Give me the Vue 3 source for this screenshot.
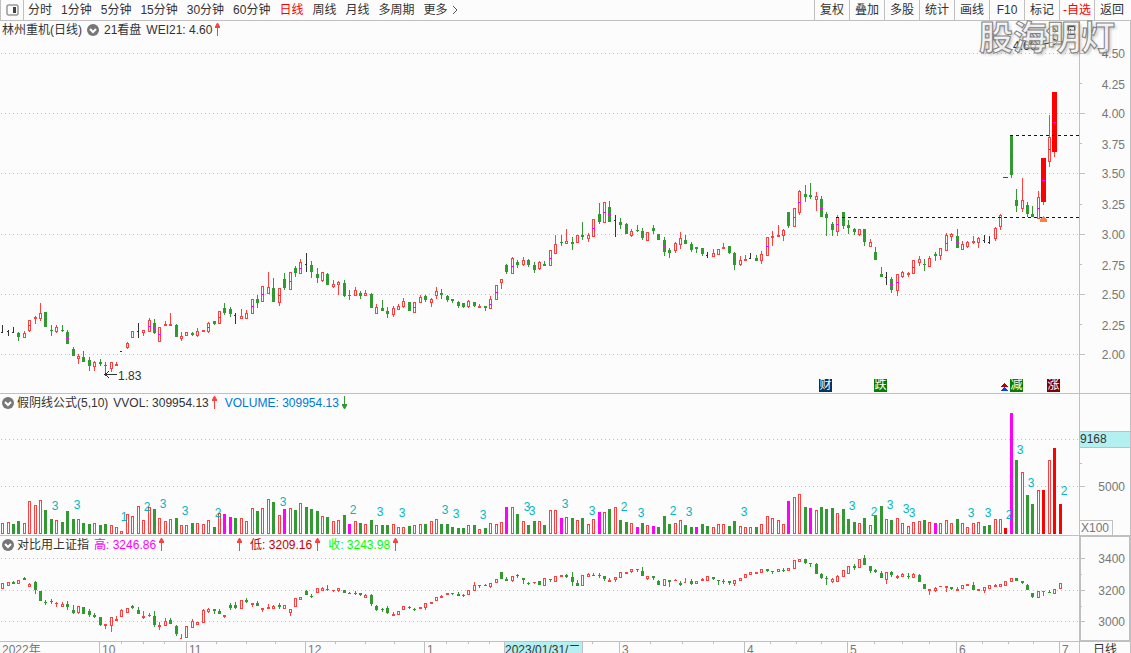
<script setup>
const periods = ['分时', '1分钟', '5分钟', '15分钟', '30分钟', '60分钟', '日线', '周线', '月线', '多周期']
const tools = ['复权', '叠加', '多股', '统计', '画线', 'F10', '标记', '-自选', '返回']

const PLOT_W = 1079
const RED = '#ff4040'
const GREEN = '#339933'
const MAGENTA = '#ff00ff'
const DARK = '#333333'
const PAPER = '#fcfcfc'

const barX = (i) => Math.floor(2.6 + 5.423 * i)

// One bar per entry: kind, then high, body top, body bottom, low in plot units.
const priceData = `
k325,332,332,333 k330,331,331,336 k327,332,332,333 g332,333,337,341 r331,333,338,338 r320,320,331,332 r316,317,319,324 r303,313,319,321
g312,312,327,327 g325,330,331,336 r325,327,332,333 g325,330,331,332 g330,332,344,344 g347,349,356,356 r354,356,359,364 g351,357,362,362
g357,360,366,371 r361,362,367,371 g359,362,364,366 g362,365,366,375 r362,362,369,372 r362,364,366,366 k351,351,351,351 r342,343,348,349
r331,331,338,338 k323,331,331,338 r330,330,333,336 r318,320,332,332 g319,323,333,334 r327,327,342,342 r321,324,326,326 r313,324,326,326
g324,325,337,337 r332,336,339,341 r332,332,336,336 g332,333,335,336 r328,331,336,337 r330,330,332,332 r322,323,332,333 g321,321,324,325
r311,311,324,324 g303,308,313,315 g307,309,314,317 k313,315,315,324 r309,316,319,319 r310,313,319,319 r299,299,314,314 g295,299,303,308
r286,286,302,302 r272,287,294,294 g278,288,302,302 r288,288,303,306 g273,279,288,290 r272,272,290,290 g266,268,273,277 r259,262,274,274
k253,264,264,272 g261,265,272,278 g268,274,278,283 r272,272,281,282 g273,274,285,285 r280,284,287,288 r281,282,285,295 g280,283,296,297
g290,295,296,300 r287,290,296,296 g291,293,296,299 r290,293,296,296 g293,294,308,308 r304,307,314,314 g300,308,311,311 g307,311,314,318
r306,308,315,317 r304,306,310,310 r298,301,307,308 g302,302,311,311 r302,302,313,313 r295,297,303,303 g295,296,300,302 r298,299,303,307
r287,291,296,299 g289,293,295,299 g295,296,300,302 g299,299,301,303 g301,302,306,308 g303,303,307,308 r300,301,307,308 g302,302,306,307
r304,306,308,308 g306,306,308,311 r296,299,309,309 r285,285,300,300 r279,279,283,289 g264,265,272,274 r257,258,274,274 g260,262,265,268
r257,260,265,266 g259,260,265,267 g262,265,270,273 r261,262,269,270 g261,264,266,266 r250,250,266,266 r235,244,254,254 g235,242,243,246
r229,241,244,244 g237,242,244,250 r235,235,243,243 g222,235,237,240 r233,235,239,242 r219,219,237,237 g203,214,222,224 r202,202,223,223
g201,207,222,222 k215,220,220,237 g218,222,225,229 g223,224,234,234 r229,231,236,237 g225,230,231,232 g228,231,238,240 r232,232,241,241
g225,228,231,234 g234,234,240,240 g237,240,252,256 g248,250,253,258 r242,243,251,253 r232,238,245,249 g235,240,244,244 g242,244,250,252
g247,247,249,253 g248,248,254,256 k252,255,255,258 r249,253,257,257 r249,249,255,255 r243,247,249,249 g246,246,253,254 g252,253,265,270
r256,260,265,266 r255,259,261,261 k253,258,258,259 g255,258,261,261 r251,254,261,264 r237,237,256,256 r231,236,238,246 r225,235,237,237
r229,230,236,241 g212,212,226,228 r208,208,227,227 r190,191,213,215 g185,194,197,202 g183,195,197,199 r192,196,200,211 g196,199,217,217
g212,214,218,236 g222,224,230,236 r215,217,232,236 g212,212,226,229 g220,225,228,234 g228,229,232,235 r229,229,235,236 g229,229,242,246
r239,242,247,247 g247,252,260,260 g267,274,277,277 k272,277,277,285 g277,279,290,293 r274,274,291,296 r271,272,277,278 r272,273,275,277
r260,260,274,274 r256,259,263,266 g259,264,265,271 r256,258,267,267 g252,254,256,261 r248,248,256,260 r233,235,251,251 r233,234,237,241
g229,236,248,248 r241,244,250,250 r241,242,247,248 r236,241,243,244 r237,238,243,248 k235,240,240,243 k236,242,242,244 r227,228,239,241
r214,215,227,230 R177,177,178,178 g135,135,175,178 g189,200,206,212 r178,200,209,212 g202,205,214,217 g206,214,217,217 r191,197,219,219
R158,158,202,205 r115,137,162,167 R92,92,152,157 R41,41,42,42`

const indexData = `
r583,583,589,589 r582,582,586,586 g581,582,584,584 r580,580,584,584 g577,578,580,580 r583,584,587,587 g581,582,590,594 g591,591,601,601
g600,602,603,605 g599,601,602,604 r602,603,604,607 r602,604,607,607 g601,604,607,610 g605,610,613,614 r606,606,613,614 g607,607,614,614
g609,611,615,617 g613,615,617,618 g617,617,625,626 r624,624,626,629 r617,617,626,632 r616,619,621,621 r609,610,617,617 r608,608,613,613
g605,606,608,609 g607,610,614,614 r611,616,618,619 r613,615,616,617 g611,616,625,627 r622,625,627,630 r618,621,626,626 g618,620,624,624
g625,626,634,636 j634,638,638,639 r626,626,638,638 r619,621,628,628 r622,622,625,625 r609,610,623,623 r608,609,612,613 g609,609,611,614
g609,611,614,614 r615,615,617,618 g603,605,608,610 g602,605,608,609 r600,600,609,609 g598,600,602,603 r603,603,605,607 g601,603,606,606
r608,608,610,612 r604,607,609,609 r605,606,609,609 g603,605,607,609 r605,605,609,609 r609,609,613,616 r598,598,607,607 r597,597,600,600
g590,591,595,595 g594,596,597,598 r588,588,593,593 r587,588,591,591 g585,589,590,591 r590,590,591,592 r588,588,591,592 g590,590,593,593
g592,593,594,594 g591,593,594,595 g593,593,595,596 r594,595,598,598 g594,595,604,606 g605,606,610,611 g608,609,610,612 g606,608,613,614
r612,614,616,616 r611,611,615,615 r606,606,610,610 g606,607,608,609 g608,609,610,611 r607,607,609,609 r603,603,608,610 r602,602,604,604
r597,597,601,601 r595,596,598,598 r593,593,595,595 g593,593,594,595 g592,594,596,596 g594,595,596,597 r590,590,595,595 r582,585,591,591
g585,585,586,588 g584,585,586,586 r583,583,587,588 r579,579,583,583 g572,572,579,579 g577,579,581,581 r576,576,581,582 g574,575,576,578
g578,578,580,584 g582,583,584,585 r582,582,583,584 g581,581,585,585 r578,578,586,586 g579,579,580,582 r576,576,582,582 r575,575,577,577
g574,575,577,578 g572,577,582,586 g580,583,586,586 r575,575,586,586 r573,574,577,577 g573,575,576,576 g573,575,576,578 g576,576,579,581
r578,580,582,582 r577,577,580,582 r572,572,578,578 r572,572,574,574 r569,569,572,573 g569,569,570,572 g567,571,576,576 r576,576,579,580
g576,576,578,580 g580,581,585,585 r579,579,586,586 g580,580,582,587 r579,580,581,581 g581,583,585,586 j578,582,582,583 g579,581,584,585
r581,581,584,584 r578,579,581,581 r576,576,581,581 g577,577,579,580 g580,580,581,585 g579,581,582,584 g581,581,583,585 r580,580,584,586
r578,578,581,581 r574,574,578,578 r572,572,575,575 r572,572,574,574 r569,569,573,573 g569,569,571,572 g571,571,572,574 r569,569,572,572
g568,570,571,572 r568,568,571,571 r560,560,569,569 r559,559,562,562 g559,559,563,564 g563,563,564,567 g563,564,574,574 g573,574,578,579
g576,578,579,585 r578,579,582,583 r575,576,582,582 r570,570,577,577 r566,566,574,574 g564,566,568,570 r559,559,568,568 g555,558,565,565
g566,566,571,573 g569,570,572,573 g571,573,578,578 r572,572,580,584 g571,572,575,577 r575,576,578,579 r573,574,577,577 g573,576,577,579
r573,574,578,578 g574,575,582,582 g584,584,589,589 r589,589,591,595 r587,588,591,592 r586,586,587,587 r586,586,588,592 g587,587,589,590
r587,589,591,591 r585,585,589,589 r584,584,586,586 g582,585,590,590 r589,589,591,591 r587,587,591,593 r585,585,589,589 r584,585,587,587
r584,584,587,587 r581,581,586,586 r578,578,582,582 g578,578,581,581 g581,581,583,584 g584,585,590,590 g593,593,597,598 r591,591,598,598
r591,591,592,596 g590,592,593,593 r589,589,594,594 r583,583,589,589`

const volumeData = `
r523 r522 g524 g521 r523 r501 r505 r500 g510 g519 r520 g522 g511 g519 r519 g523 g524 r523 g525 g524 r525 r527 r531 r514 r516 r506 r520 r507
g509 r518 r521 r519 g518 r525 r525 g523 r523 r524 r520 g527 r513 m514 m517 g518 r518 r521 r508 g511 r508 r499 g502 r515 m509 r508 g510 r503
g507 g509 g511 r516 g517 r521 r520 g515 m524 r521 g523 r524 g520 r525 g525 g525 r524 r527 r527 g526 r525 r524 g524 r521 r519 g524 g524 g527
g528 g528 r525 g525 r529 g528 r523 r524 r522 m507 r507 g514 r521 g525 g521 r521 g525 r510 r510 m518 r517 g518 r520 g518 r524 r519 m512 r512
g509 r507 g520 g522 r523 m527 g523 r525 m526 g527 g516 g524 r523 r520 g525 g527 m527 g524 g526 r527 r524 r524 g526 g521 r526 r527 r527 g527
r524 r516 r518 r520 r524 m501 r497 r494 g507 m508 r510 g507 g509 g508 r513 g509 g519 g522 r523 g518 r525 g516 g506 r519 g520 r518 r523 r526
r522 r521 g520 r522 m523 r523 r520 r523 g519 r523 r527 r523 r522 g526 g525 r519 r519 R528 m413 g460 r472 g495 g504 r490 R490 r460 R448 R504`

const parse = (s) =>
  s.trim().split(/\s+/).map((e) => ({ kind: e[0], v: e.slice(1).split(',').map(Number) }))

function candleRects(data, wideSolid, marks) {
  const out = []
  parse(data).forEach(({ kind, v: [h, t, b, l] }, i) => {
    const x = barX(i)
    const put = (rx, y, w, hh, fill) => out.push({ x: rx, y, w, h: hh, fill })
    if (kind === 'k' || kind === 'j') {
      const c = kind === 'k' ? DARK : RED
      put(x, h, 1, Math.max(1, l - h), c)
      put(x - 1, t, 2, 1, c)
      return
    }
    const color = kind === 'g' ? GREEN : RED
    put(x, h, 1, Math.max(1, l - h), color)
    if (kind === 'R') {
      put(x - 2, t, wideSolid, b - t, '#ff0000')
    } else {
      put(x - 1, t, 3, b - t, color)
      if (kind === 'r' && b - t > 2) put(x, t + 1, 1, b - t - 2, PAPER)
    }
    if (marks && (b - t) / (594 - b) > 0.033) put(x - 1, Math.floor((t + b) / 2), 3, 1, MAGENTA)
  })
  return out
}

const priceRects = candleRects(priceData, 5, true)
const indexRects = candleRects(indexData, 3, false)

const volumeRects = []
parse(volumeData).forEach(({ kind, v: [top] }, i) => {
  const x = barX(i)
  const fill = { r: RED, g: GREEN, m: MAGENTA, R: '#ff0000' }[kind]
  volumeRects.push({ x: x - 1, y: top, w: 3, h: 534 - top, fill })
  if (kind === 'r') volumeRects.push({ x, y: top + 1, w: 1, h: 532 - top, fill: PAPER })
})

const counts = [
  [3, 55, 506], [3, 77, 505], [1, 124, 517], [2, 147, 507], [3, 163, 504], [3, 185, 511], [2, 218, 513],
  [3, 283, 502], [2, 353, 510], [3, 380, 512], [3, 402, 513], [3, 445, 510], [3, 456, 514], [3, 483, 515],
  [3, 527, 507], [3, 532, 511], [3, 565, 504], [3, 592, 511], [2, 624, 507], [3, 641, 513], [2, 673, 511],
  [3, 689, 512], [3, 744, 512], [3, 852, 506], [2, 874, 512], [3, 890, 505], [3, 906, 509], [3, 912, 513],
  [3, 971, 513], [3, 988, 513], [2, 1009, 515], [3, 1020, 450], [3, 1031, 483], [2, 1064, 491],
]
const pct = (n, from, size) => ((n - from) / size) * 100 + '%'
const countStyle = ([, x, y]) => ({ left: pct(x, 0, PLOT_W), top: pct(y, 394, 141) })

const priceLabels = ['4.50', '4.25', '4.00', '3.75', '3.50', '3.25', '3.00', '2.75', '2.50', '2.25', '2.00'].map(
  (text, i) => ({ text, y: [54, 85, 114, 145, 174, 205, 235, 266, 295, 326, 355][i] }),
)
const indexLabels = [
  { text: '3400', y: 559 },
  { text: '3200', y: 591 },
  { text: '3000', y: 622 },
]
const months = [
  { text: '10', x: 99 }, { text: '11', x: 186 }, { text: '12', x: 305 }, { text: '1', x: 424 },
  { text: '3', x: 619 }, { text: '4', x: 744 }, { text: '5', x: 847 }, { text: '6', x: 956 }, { text: '7', x: 1059 },
]
const weekTicks = [121, 143, 164, 216, 246, 275, 335, 365, 394, 446, 468, 489, 592, 650, 682, 713, 770, 796, 821, 874, 902, 929, 982, 1008, 1033]

const badges = [
  { text: '财', x: 819, bg: '#003366' },
  { text: '跌', x: 874, bg: '#008000' },
  { text: '减', x: 1010, bg: '#008000' },
  { text: '涨', x: 1047, bg: '#800000' },
]
</script>

<template>
  <div class="app">
    <header class="toolbar">
      <button class="side" type="button" aria-label="侧栏">
        <svg width="13" height="12" viewBox="0 0 13 12">
          <rect x="1" y="1" width="11" height="10" rx="1" fill="none" stroke="#666" />
          <rect x="7" y="3" width="3" height="6" fill="#444" />
        </svg>
      </button>
      <nav class="periods">
        <button v-for="p in periods" :key="p" type="button" :class="{ on: p === '日线' }">{{ p }}</button>
        <button type="button" class="more">
          更多
          <svg width="6" height="10" viewBox="0 0 6 10"><path d="M1 1l4 4-4 4" fill="none" stroke="#555" /></svg>
        </button>
      </nav>
      <nav class="tools">
        <button v-for="t in tools" :key="t" type="button" :class="{ on: t === '-自选' }">{{ t }}</button>
      </nav>
    </header>

    <section class="panel">
      <div class="plot">
        <svg class="canvas" viewBox="0 21 1079 372" preserveAspectRatio="none" shape-rendering="crispEdges">
          <path v-for="y in [53, 113, 173, 234, 294, 354]" :key="y" :d="`M1 ${y}.5H1079`" stroke="#c0c0c0" stroke-dasharray="1 3" />
          <rect v-for="(r, i) in priceRects" :key="i" :x="r.x" :y="r.y" :width="r.w" :height="r.h" :fill="r.fill" />
          <path d="M1010 135.5H1079M836 217.5H1079" stroke="#0000b4" stroke-dasharray="3 3" />
          <path d="M1040 222v-3l3-3 4 3v3z" fill="#ff8040" />
          <path d="M105 374.5h12M109 371l-4 3.500 4 3.500" fill="none" stroke="#333" />
          <path d="M1001 387l3.500-4 3.500 4z" fill="#c00000" />
          <path d="M1001 391l3.500-4 3.500 4z" fill="#0040ff" />
        </svg>
        <div class="info">
          <span>林州重机(日线)</span>
          <button class="fold" type="button" aria-label="展开"><svg viewBox="0 0 12 12"><circle cx="6" cy="6" r="6" /><path d="M3 5l3 3 3-3" /></svg></button>
          <span>21看盘</span>
          <span>WEI21: 4.60</span>
          <svg class="arrow up" viewBox="0 0 5 13"><path d="M2.500 13V2M0 4.500L2.500 0 5 4.500z" /></svg>
        </div>
        <span class="tag" :style="{ left: pct(118, 0, 1079), top: pct(376, 21, 372) }">1.83</span>
        <span class="tag" :style="{ left: pct(1013, 0, 1079), top: pct(46, 21, 372) }">4.60</span>
        <svg class="canvas" viewBox="0 21 1079 372" preserveAspectRatio="none">
          <path d="M1051.500 26l5 5-5 5-5-5zM1068.500 26.500h6v8h-6zM1070.500 29v4" fill="none" stroke="#444" />
          <path d="M1040 45l18-4M1053 39l5 2-4 4" fill="none" stroke="#333" />
        </svg>
        <span v-for="b in badges" :key="b.text" class="badge" :style="{ left: pct(b.x, 0, 1079), background: b.bg }">{{ b.text }}</span>
      </div>
      <div class="axis">
        <svg class="canvas" viewBox="0 21 50 372" preserveAspectRatio="none" shape-rendering="crispEdges">
          <path d="M0 53.500h5M0 113.500h5M0 173.500h5M0 234.500h5M0 294.500h5M0 354.500h5M0 83.500h2M0 143.500h2M0 204.500h2M0 264.500h2M0 324.500h2" stroke="#c0c0c0" />
        </svg>
        <span v-for="l in priceLabels" :key="l.text" class="label" :style="{ top: pct(l.y, 21, 372) }">{{ l.text }}</span>
      </div>
    </section>

    <section class="panel">
      <div class="plot">
        <svg class="canvas" viewBox="0 394 1079 141" preserveAspectRatio="none" shape-rendering="crispEdges">
          <path d="M1 439.500H1079M1 486.500H1079" stroke="#c0c0c0" stroke-dasharray="1 3" />
          <rect v-for="(r, i) in volumeRects" :key="i" :x="r.x" :y="r.y" :width="r.w" :height="r.h" :fill="r.fill" />
        </svg>
        <span v-for="(c, i) in counts" :key="i" class="count" :style="countStyle(c)">{{ c[0] }}</span>
        <div class="info">
          <button class="fold" type="button" aria-label="展开"><svg viewBox="0 0 12 12"><circle cx="6" cy="6" r="6" /><path d="M3 5l3 3 3-3" /></svg></button>
          <span>假阴线公式(5,10)</span>
          <span>VVOL: 309954.13</span>
          <svg class="arrow up" viewBox="0 0 5 13"><path d="M2.500 13V2M0 4.500L2.500 0 5 4.500z" /></svg>
          <span class="blue">VOLUME: 309954.13</span>
          <svg class="arrow down" viewBox="0 0 5 13"><path d="M2.500 0V11M0 8.500L2.500 13 5 8.500z" /></svg>
        </div>
      </div>
      <div class="axis">
        <svg class="canvas" viewBox="0 394 50 141" preserveAspectRatio="none" shape-rendering="crispEdges">
          <path d="M0 486.500h5M0 463.500h2" stroke="#c0c0c0" />
        </svg>
        <span class="current" :style="{ top: pct(431, 394, 141) }">9168</span>
        <span class="label" :style="{ top: pct(487, 394, 141) }">5000</span>
        <span class="unit">X100</span>
      </div>
    </section>

    <section class="panel">
      <div class="plot">
        <svg class="canvas" viewBox="0 536 1079 105" preserveAspectRatio="none" shape-rendering="crispEdges">
          <path d="M1 558.500H1079M1 590.500H1079M1 621.500H1079" stroke="#c0c0c0" stroke-dasharray="1 3" />
          <rect v-for="(r, i) in indexRects" :key="i" :x="r.x" :y="r.y" :width="r.w" :height="r.h" :fill="r.fill" />
        </svg>
        <div class="info">
          <button class="fold" type="button" aria-label="展开"><svg viewBox="0 0 12 12"><circle cx="6" cy="6" r="6" /><path d="M3 5l3 3 3-3" /></svg></button>
          <span>对比用上证指</span>
          <span class="magenta">高: 3246.86</span>
          <svg class="arrow up" viewBox="0 0 5 13"><path d="M2.500 13V2M0 4.500L2.500 0 5 4.500z" /></svg>
          <span class="white">开: 3209.16</span>
          <svg class="arrow up" viewBox="0 0 5 13"><path d="M2.500 13V2M0 4.500L2.500 0 5 4.500z" /></svg>
          <span class="crimson">低: 3209.16</span>
          <svg class="arrow up" viewBox="0 0 5 13"><path d="M2.500 13V2M0 4.500L2.500 0 5 4.500z" /></svg>
          <span class="lime">收: 3243.98</span>
          <svg class="arrow up" viewBox="0 0 5 13"><path d="M2.500 13V2M0 4.500L2.500 0 5 4.500z" /></svg>
        </div>
      </div>
      <div class="axis selected">
        <svg class="canvas" viewBox="0 536 50 105" preserveAspectRatio="none" shape-rendering="crispEdges">
          <path d="M0 558.500h5M0 590.500h5M0 621.500h5M0 574.500h2M0 606.500h2" stroke="#c0c0c0" />
        </svg>
        <span v-for="l in indexLabels" :key="l.text" class="label" :style="{ top: pct(l.y, 536, 105) }">{{ l.text }}</span>
      </div>
    </section>

    <footer class="timeline">
      <div class="dates">
        <i v-for="x in weekTicks" :key="x" class="tick" :style="{ left: pct(x, 0, 1079) }"></i>
        <span class="month first">2022年</span>
        <span v-for="m in months" :key="m.text" class="month" :style="{ left: pct(m.x, 0, 1079) }">{{ m.text }}</span>
        <span class="cursor" :style="{ left: pct(504, 0, 1079) }">2023/01/31/二</span>
      </div>
      <div class="cycle">日线</div>
    </footer>

    <div class="watermark">股海明灯</div>
  </div>
</template>

<style>
body {
  margin: 0;
  overflow: hidden;
}
</style>

<style scoped>
.app {
  position: relative;
  display: grid;
  grid-template-rows: 21px 373fr 142fr 106fr 11px;
  height: 100vh;
  box-sizing: border-box;
  background: #fcfcfc;
  color: #333;
  font: 12px/16px 'Liberation Sans', 'Noto Sans CJK SC', sans-serif;
  white-space: nowrap;
}
button {
  margin: 0;
  padding: 0;
  border: 0;
  background: none;
  color: inherit;
  font: inherit;
}
.toolbar {
  display: flex;
  align-items: stretch;
  border-bottom: 1px solid #c0c0c0;
  padding-right: 2px;
}
.side {
  display: flex;
  align-items: center;
  justify-content: center;
  width: 24px;
  box-sizing: border-box;
  border-left: 1px solid #c0c0c0;
  border-right: 1px solid #c0c0c0;
}
.periods {
  display: flex;
  gap: 9px;
  padding-left: 4px;
}
.more {
  display: flex;
  align-items: center;
  gap: 4px;
}
.on {
  color: #f00;
}
.tools {
  display: flex;
  margin-left: auto;
}
.tools button {
  width: 35px;
  border-left: 1px solid #c0c0c0;
}
.panel {
  display: grid;
  grid-template-columns: 1fr 52px;
  min-height: 0;
  border-bottom: 1px solid #c0c0c0;
}
.plot,
.axis {
  position: relative;
  min-width: 0;
  min-height: 0;
}
.axis {
  border-left: 1px solid #c0c0c0;
  border-right: 1px solid #c0c0c0;
}
.axis.selected {
  box-shadow: inset 0 0 0 1px #c0c0c0;
}
.canvas {
  position: absolute;
  inset: 0;
  width: 100%;
  height: 100%;
}
.info {
  position: relative;
  display: flex;
  align-items: center;
  gap: 5px;
  height: 17px;
  padding-left: 2px;
}
.fold {
  display: flex;
  width: 12px;
  height: 12px;
}
.fold:first-child {
  margin-right: -2px;
}
.fold svg {
  width: 12px;
  height: 12px;
}
.fold circle {
  fill: #777;
}
.fold path {
  fill: none;
  stroke: #fff;
  stroke-width: 2;
}
.arrow {
  width: 5px;
  height: 13px;
  margin-left: -2px;
  margin-right: 3px;
}
.up path {
  fill: #ff4040;
  stroke: #ff4040;
}
.down path {
  fill: #339933;
  stroke: #339933;
}
.blue {
  color: #0078d7;
}
.magenta {
  color: #f0f;
}
.white {
  color: #fff;
}
.crimson {
  color: #c00000;
}
.lime {
  color: #0f0;
}
.tag {
  position: absolute;
  transform: translateY(-50%);
}
.count {
  position: absolute;
  transform: translate(-50%, -50%);
  color: #00b8c0;
}
.badge {
  position: absolute;
  bottom: 1px;
  width: 13px;
  height: 13px;
  color: #fff;
  font-size: 12px;
  line-height: 13px;
  text-align: center;
}
.label {
  position: absolute;
  right: 5px;
  transform: translateY(-50%);
  color: #777;
}
.current {
  position: absolute;
  left: 0;
  right: 0;
  height: 15px;
  line-height: 15px;
  border-top: 1px solid #c0c0c0;
  border-bottom: 1px solid #c0c0c0;
  background: #b4f0f0;
}
.unit {
  position: absolute;
  left: 0;
  bottom: 0;
  padding: 0 3px 0 1px;
  height: 14px;
  line-height: 14px;
  border-top: 1px solid #c0c0c0;
  border-right: 1px solid #c0c0c0;
  color: #777;
}
.timeline {
  display: grid;
  grid-template-columns: 1fr 52px;
  height: 11px;
  overflow: hidden;
}
.dates {
  position: relative;
}
.month {
  position: absolute;
  top: 0;
  padding-left: 2px;
  border-left: 1px solid #c0c0c0;
  color: #777;
}
.first {
  left: 0;
  border-left: 0;
}
.cursor {
  position: absolute;
  top: 0;
  width: 77px;
  overflow: hidden;
  border-left: 1px solid #c0c0c0;
  border-right: 1px solid #c0c0c0;
  background: #b4f0f0;
}
.tick {
  position: absolute;
  top: 0;
  width: 1px;
  height: 2px;
  background: #c0c0c0;
}
.cycle {
  border-left: 1px solid #c0c0c0;
  border-right: 1px solid #c0c0c0;
  text-align: center;
}
.watermark {
  position: absolute;
  top: 14px;
  right: 16px;
  color: rgba(255, 255, 255, 0.6);
  font: bold 34px/44px 'Noto Sans CJK SC', sans-serif;
  -webkit-text-stroke: 1px #808080;
  text-shadow: 2px 2px 3px rgba(0, 0, 0, 0.2);
  pointer-events: none;
}
</style>
